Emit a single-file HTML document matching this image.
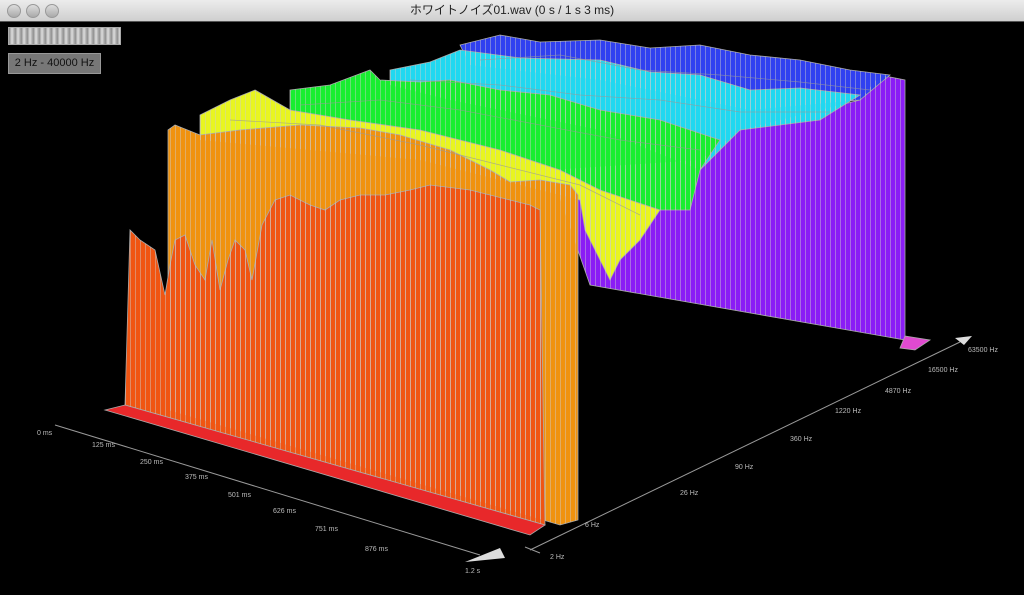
<!DOCTYPE html><html><head><meta charset="utf-8"><style>
html,body{margin:0;padding:0;width:1024px;height:595px;overflow:hidden;background:#000}
.tb{position:absolute;left:0;top:0;width:1024px;height:21px;background:linear-gradient(#ececec,#cfcfcf);border-bottom:1px solid #555;font:12px "Liberation Sans","Noto Sans CJK JP",sans-serif;color:#222;text-align:center;line-height:21px}
.dot{position:absolute;top:4px;width:12px;height:12px;border-radius:50%;background:linear-gradient(#ddd,#aaa);border:1px solid #999}
svg{position:absolute;left:0;top:0}
.lb{font:7px "Liberation Sans",sans-serif;fill:#bbb}
</style></head><body>
<div class="tb">ホワイトノイズ01.wav (0 s / 1 s 3 ms)</div>
<div class="dot" style="left:7px"></div><div class="dot" style="left:26px"></div><div class="dot" style="left:45px"></div>
<div style="position:absolute;left:8px;top:27px;width:111px;height:16px;background:repeating-linear-gradient(90deg,#888 0,#ddd 3px,#999 6px);border:1px solid #aaa"></div>
<div style="position:absolute;left:8px;top:53px;width:91px;height:19px;background:#777;border:1px solid #999;font:11px 'Liberation Sans',sans-serif;color:#111;line-height:19px;text-align:center">2 Hz - 40000 Hz</div>
<svg width="1024" height="595" viewBox="0 0 1024 595">
<defs><pattern id="s" width="5" height="10" patternUnits="userSpaceOnUse"><line x1="0.5" y1="0" x2="0.5" y2="10" stroke="#ccc" stroke-opacity="0.45" stroke-width="1"/></pattern></defs>
<g stroke="#aaa" stroke-width="0.8">
<polygon fill="#8a1cf5" points="550,170 700,160 740,130 860,100 880,75 905,80 905,340 590,285"/>
<polygon fill="#e04ad0" points="905,336 930,340 915,350 900,348"/>
<polygon fill="#3040f0" points="460,45 500,35 540,42 600,40 650,48 700,45 750,55 800,60 850,70 890,75 860,100 750,110 600,80 470,65"/>
<polygon fill="#20d8f0" points="390,70 430,62 460,50 520,58 600,60 650,72 700,75 750,90 800,88 860,95 820,120 740,130 700,170 600,130 450,100 390,85"/>
<polygon fill="#18ee30" points="290,90 330,85 370,70 380,80 420,82 450,80 500,90 550,95 600,110 660,120 720,140 700,170 690,210 650,210 550,170 400,130 290,120"/>
<polygon fill="#e8f520" points="200,115 230,100 255,90 290,110 350,120 420,130 500,150 560,170 600,190 660,210 640,240 620,260 610,280 600,260 585,230 580,200 420,160 200,140"/>
<polygon fill="#f0920e" points="168,130 175,125 200,135 240,130 300,125 360,128 400,135 450,150 490,170 510,182 540,180 570,185 578,195 578,520 560,525 168,410"/>
<polygon fill="#f05512" points="125,405 130,230 140,240 155,250 165,295 170,265 175,240 185,235 195,265 205,280 212,240 220,290 228,260 235,240 245,250 252,280 262,225 275,200 290,195 310,205 325,210 340,200 360,195 385,195 410,190 430,185 470,190 490,195 510,200 530,205 540,210 545,525"/>
<polygon fill="#e8282a" points="105,410 125,405 545,525 530,535"/>
</g>
<g fill="url(#s)">
<polygon points="550,170 700,160 740,130 860,100 880,75 905,80 905,340 590,285"/>
<polygon points="460,45 500,35 540,42 600,40 650,48 700,45 750,55 800,60 850,70 890,75 860,100 750,110 600,80 470,65"/>
<polygon points="390,70 430,62 460,50 520,58 600,60 650,72 700,75 750,90 800,88 860,95 820,120 740,130 700,170 600,130 450,100 390,85"/>
<polygon points="290,90 330,85 370,70 380,80 420,82 450,80 500,90 550,95 600,110 660,120 720,140 700,170 690,210 650,210 550,170 400,130 290,120"/>
<polygon points="200,115 230,100 255,90 290,110 350,120 420,130 500,150 560,170 600,190 660,210 640,240 620,260 610,280 600,260 585,230 580,200 420,160 200,140"/>
<polygon points="168,130 175,125 200,135 240,130 300,125 360,128 400,135 450,150 490,170 510,182 540,180 570,185 578,195 578,520 560,525 168,410"/>
<polygon points="125,405 130,230 140,240 155,250 165,295 170,265 175,240 185,235 195,265 205,280 212,240 220,290 228,260 235,240 245,250 252,280 262,225 275,200 290,195 310,205 325,210 340,200 360,195 385,195 410,190 430,185 470,190 490,195 510,200 530,205 540,210 545,525"/>
</g>
<g fill="none" stroke="#999" stroke-width="0.7" stroke-opacity="0.7">
<polyline points="480,60 560,55 640,70 720,75 800,82 870,90"/>
<polyline points="410,80 500,85 580,95 660,100 740,112 830,112"/>
<polyline points="300,105 380,100 460,110 540,125 620,140 700,150"/>
<polyline points="230,120 320,125 420,145 500,165 580,185 640,215"/>
</g>
<g stroke="#999" stroke-width="1">
<line x1="55" y1="425" x2="480" y2="555"/>
<line x1="530" y1="550" x2="960" y2="342"/>
<line x1="525" y1="547" x2="540" y2="553"/>
</g>
<polygon fill="#ddd" points="465,562 505,558 500,548"/>
<polygon fill="#ddd" points="955,338 972,336 964,345"/>
<g class="lb">
<text x="37" y="435">0 ms</text><text x="92" y="447">125 ms</text><text x="140" y="464">250 ms</text><text x="185" y="479">375 ms</text><text x="228" y="497">501 ms</text><text x="273" y="513">626 ms</text><text x="315" y="531">751 ms</text><text x="365" y="551">876 ms</text><text x="465" y="573">1.2 s</text>
<text x="550" y="559">2 Hz</text><text x="585" y="527">6 Hz</text><text x="680" y="495">26 Hz</text><text x="735" y="469">90 Hz</text><text x="790" y="441">360 Hz</text><text x="835" y="413">1220 Hz</text><text x="885" y="393">4870 Hz</text><text x="928" y="372">16500 Hz</text><text x="968" y="352">63500 Hz</text>
</g>
</svg>
</body></html>
